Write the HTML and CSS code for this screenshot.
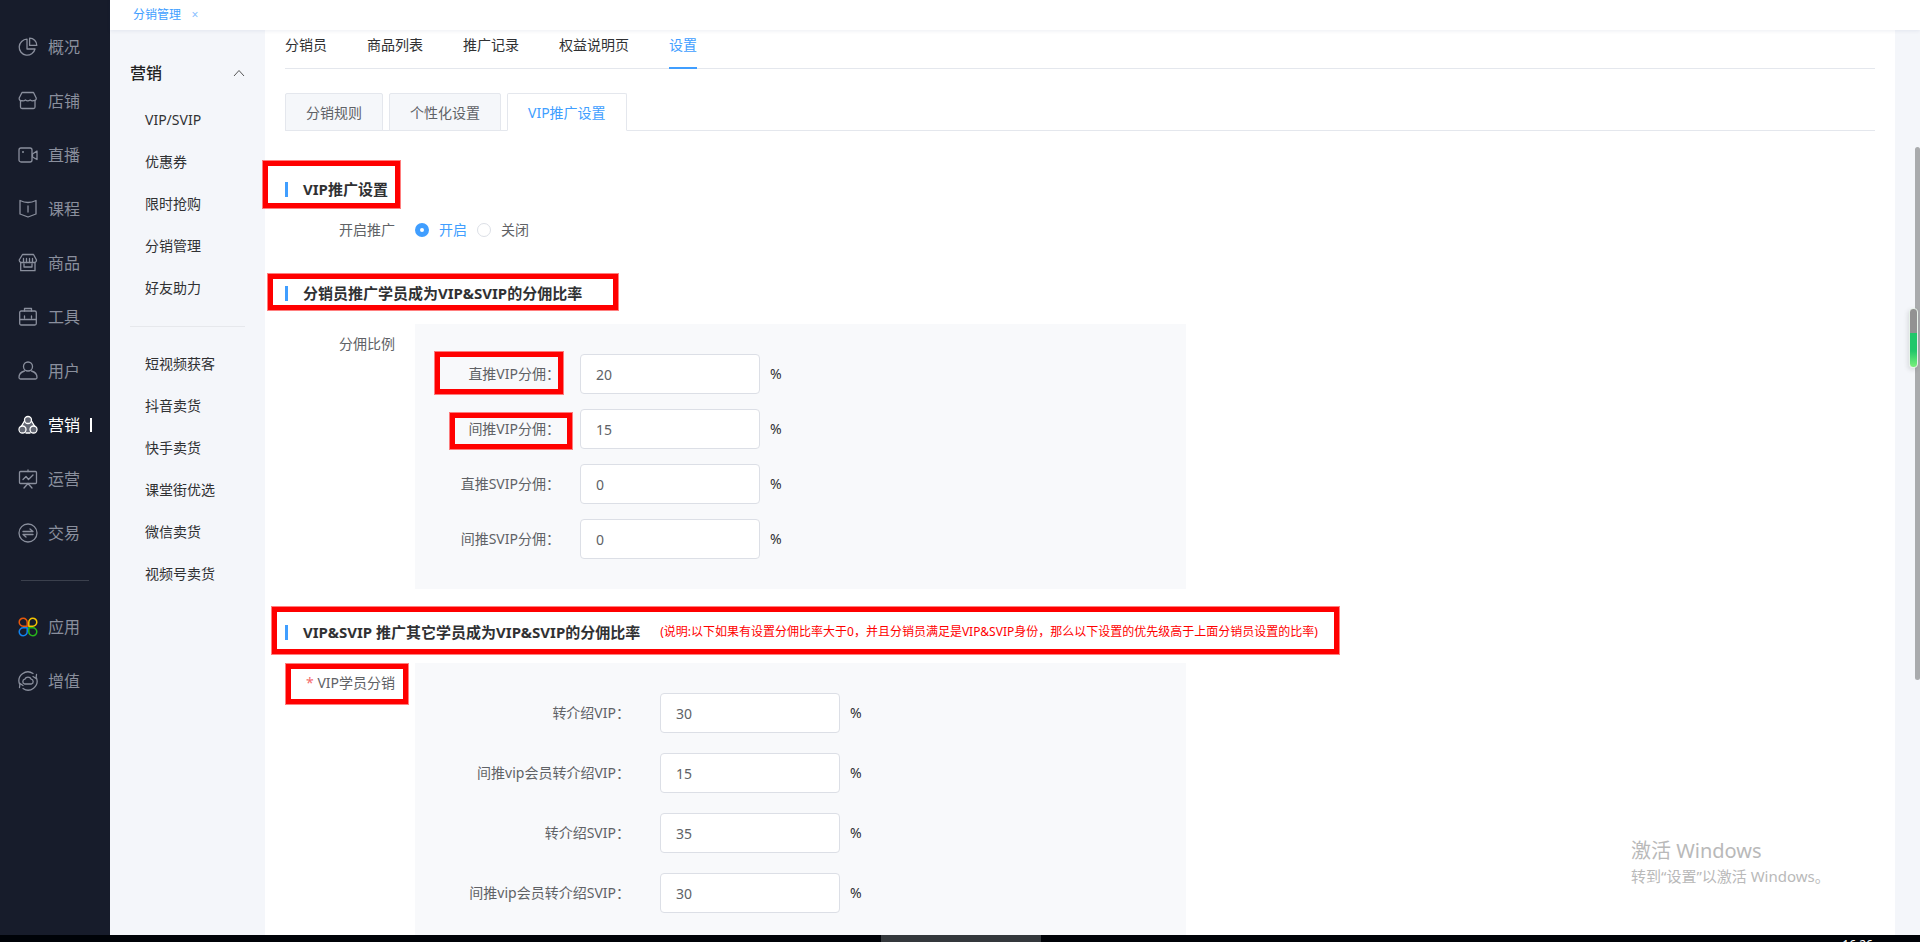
FILE: index.html
```html
<!DOCTYPE html>
<html lang="zh-CN">
<head>
<meta charset="utf-8">
<title>分销管理</title>
<link rel="stylesheet" href="styles.css">
</head>
<body>
<div class="app">
  <nav class="sidebar" aria-label="主导航">
    <a class="nav-item" href="#"><svg class="icon" viewBox="0 0 20 20"><path d="M9 2.200A8 8 0 1 0 17 12H9z"/><path d="M11.600 1.200v7.200h7.200a7.200 7.200 0 0 0-7.200-7.200z"/></svg>概况</a>
    <a class="nav-item" href="#"><svg class="icon" viewBox="0 0 20 20"><path d="M4 1.500h11.500l2.700 5.500a2.200 2.200 0 0 1-2.700 2.600 3.500 3.500 0 0 1-3.300-.6 4 4 0 0 1-4.800 0 3.500 3.500 0 0 1-3.300.6A2.200 2.200 0 0 1 1.200 7z"/><path d="M2.500 9.500V16q0 1.500 1.500 1.500h11.500q1.500 0 1.500-1.500V9.500"/></svg>店铺</a>
    <a class="nav-item" href="#"><svg class="icon" viewBox="0 0 20 20"><rect x="1" y="3" width="13" height="14" rx="2"/><circle cx="5" cy="7" r="1" class="dot"/><path d="M14.500 9l4.500-3v8.500L14.500 12z"/></svg>直播</a>
    <a class="nav-item" href="#"><svg class="icon" viewBox="0 0 20 20"><path d="M2 1.500q4 2 8 2 4 0 8-2v13.500l-8 3-8-3zM10 7v6"/></svg>课程</a>
    <a class="nav-item" href="#"><svg class="icon" viewBox="0 0 20 20"><path d="M4.500 1.500h11L18.500 7q0 2-1.700 2.500H3Q1.200 9 1.200 7z"/><path d="M2.700 9.500v8.200h14.300V9.500M5.500 5.500v4M8.500 5.500v4M11.500 5.500v4M14.500 5.500v4M6 11v3h8v-3"/></svg>商品</a>
    <a class="nav-item" href="#"><svg class="icon" viewBox="0 0 20 20"><rect x="1.700" y="4" width="16.600" height="14" rx="1.500"/><path d="M6.500 4V1.500h7V4M2 12.500h16M6.500 9v2M13.500 9v2"/></svg>工具</a>
    <a class="nav-item" href="#"><svg class="icon" viewBox="0 0 20 20"><circle cx="10" cy="5.500" r="4.500"/><path d="M6.500 10Q1 11.500 1 16.500q0 1.500 1.500 1.500h15q1.500 0 1.500-1.500 0-5-5.500-6.500"/></svg>用户</a>
    <a class="nav-item active" href="#"><svg class="icon" viewBox="0 0 20 20"><path d="M8 2L1.500 14Q2 18 6 18h9q4-1 3.500-4L12 2z" class="shade"/><circle cx="10" cy="5" r="3.500"/><circle cx="4.500" cy="14.500" r="3.500"/><circle cx="15.500" cy="14.500" r="3.500"/><path d="M6.500 6l-3 5M13.500 6l3 5M8 18h4"/></svg>营销</a>
    <a class="nav-item" href="#"><svg class="icon" viewBox="0 0 20 20"><rect x="1.500" y="2.500" width="17" height="12" rx="1"/><path d="M10 1v1.500M5 10.500l3-3 2.500 3L15 6M10 14.500L6 19M10 14.500l4 4.500"/></svg>运营</a>
    <a class="nav-item" href="#"><svg class="icon" viewBox="0 0 20 20"><circle cx="10" cy="10" r="9"/><path d="M5 8.500h10L12 6M15 11.500H5L8 14"/></svg>交易</a>
    <hr class="nav-line">
    <a class="nav-item" href="#"><svg class="icon apps" viewBox="0 0 20 20"><path stroke="#e8590c" d="M9.200 9.200H5.300A4 4 0 1 1 9.200 5.300z"/><path stroke="#f5c400" d="M10.800 9.200h3.900a4 4 0 1 0-3.900-3.900z"/><path stroke="#1283ee" d="M9.200 10.800H5.300a4 4 0 1 0 3.900 3.900z"/><path stroke="#27b51b" d="M10.800 10.800h3.900a4 4 0 1 1-3.900 3.900z"/></svg>应用</a>
    <a class="nav-item" href="#"><svg class="icon" viewBox="0 0 20 20"><path d="M1.500 13A9 9 0 0 1 15 2.500M18.500 7A9 9 0 0 1 5 17.500M18.500 3.500l-.5 4-3-2M1.500 16.500l.5-4 3 2"/><path d="M6.500 13a2.500 2.500 0 0 1 .3-4.800 3.500 3.500 0 0 1 6.400 0 2.500 2.500 0 0 1 .3 4.800z"/></svg>增值</a>
  </nav>

  <header class="topbar">
    <a class="page-tab" href="#">分销管理</a>
    <button class="page-close" type="button" aria-label="关闭标签">×</button>
  </header>

  <aside class="submenu">
    <button class="submenu-head" type="button">营销<svg class="chevron" viewBox="0 0 12 8"><path d="M1 7l5-5.500L11 7"/></svg></button>
    <a href="#">VIP/SVIP</a>
    <a href="#">优惠券</a>
    <a href="#">限时抢购</a>
    <a href="#">分销管理</a>
    <a href="#">好友助力</a>
    <hr>
    <a href="#">短视频获客</a>
    <a href="#">抖音卖货</a>
    <a href="#">快手卖货</a>
    <a href="#">课堂街优选</a>
    <a href="#">微信卖货</a>
    <a href="#">视频号卖货</a>
  </aside>

  <main class="content">
    <nav class="tabs" aria-label="分销管理">
      <a href="#">分销员</a><a href="#">商品列表</a><a href="#">推广记录</a><a href="#">权益说明页</a><a class="current" href="#">设置</a>
    </nav>
    <nav class="card-tabs" aria-label="设置">
      <a href="#">分销规则</a><a href="#">个性化设置</a><a class="current" href="#">VIP推广设置</a>
    </nav>

    <form>
      <h3 class="title first">VIP推广设置</h3>
      <div class="switch" role="radiogroup" aria-labelledby="promo">
        <span class="field-label" id="promo">开启推广</span>
        <label><input type="radio" name="promo" checked><span>开启</span></label>
        <label><input type="radio" name="promo"><span>关闭</span></label>
      </div>

      <h3 class="title second">分销员推广学员成为VIP&amp;SVIP的分佣比率</h3>
      <div class="field">
        <span class="field-label">分佣比例</span>
        <div class="panel">
          <div class="rate"><label for="a1">直推VIP分佣：</label><input id="a1" type="text" value="20"><span>%</span></div>
          <div class="rate"><label for="a2">间推VIP分佣：</label><input id="a2" type="text" value="15"><span>%</span></div>
          <div class="rate"><label for="a3">直推SVIP分佣：</label><input id="a3" type="text" value="0"><span>%</span></div>
          <div class="rate"><label for="a4">间推SVIP分佣：</label><input id="a4" type="text" value="0"><span>%</span></div>
        </div>
      </div>

      <h3 class="title third">VIP&amp;SVIP 推广其它学员成为VIP&amp;SVIP的分佣比率<small>(说明:以下如果有设置分佣比率大于0，并且分销员满足是VIP&amp;SVIP身份，那么以下设置的优先级高于上面分销员设置的比率)</small></h3>
      <div class="field">
        <span class="field-label required">VIP学员分销</span>
        <div class="panel wide">
          <div class="rate"><label for="b1">转介绍VIP：</label><input id="b1" type="text" value="30"><span>%</span></div>
          <div class="rate"><label for="b2">间推vip会员转介绍VIP：</label><input id="b2" type="text" value="15"><span>%</span></div>
          <div class="rate"><label for="b3">转介绍SVIP：</label><input id="b3" type="text" value="35"><span>%</span></div>
          <div class="rate"><label for="b4">间推vip会员转介绍SVIP：</label><input id="b4" type="text" value="30"><span>%</span></div>
        </div>
      </div>
    </form>
  </main>

  <footer class="taskbar"><span class="task"></span><span class="clock">16:26</span></footer>
</div>

<div class="scrollbar"></div>
<div class="meter"></div>
<div class="watermark"><p>激活 Windows</p><p>转到“设置”以激活 Windows。</p></div>
<div class="frame f1"></div>
<div class="frame f2"></div>
<div class="frame f3"></div>
<div class="frame f4"></div>
<div class="frame f5"></div>
<div class="frame f6"></div>
</body>
</html>
```

FILE: styles.css
```css
* { box-sizing: border-box; }

body {
  margin: 0;
  position: relative;
  height: 100vh;
  overflow: hidden;
  font: 14px/20px "Noto Sans", "Noto Sans CJK SC", sans-serif;
  color: #303133;
}

a { color: inherit; text-decoration: none; }
button { border: 0; padding: 0; background: none; font: inherit; color: inherit; }
hr { border: 0; height: 1px; }
h3, p { margin: 0; }

.app {
  display: grid;
  grid-template: 30px minmax(0, 1fr) 7px / 110px 155px minmax(0, 1fr);
  height: 100%;
  background: #f4f6fa;
}

/* dark primary navigation */
.sidebar {
  grid-row: 1 / 3;
  padding-top: 20px;
  background: #171c2b;
  overflow: hidden;
}
.nav-item {
  display: flex;
  align-items: center;
  gap: 10px;
  height: 54px;
  padding-left: 18px;
  font-size: 16px;
  color: #8a8f9d;
}
.icon {
  width: 20px;
  height: 20px;
  fill: none;
  stroke: currentColor;
  stroke-width: 1.3;
  stroke-linejoin: round;
  stroke-linecap: round;
}
.icon .dot { fill: currentColor; stroke: none; }
.icon .shade { fill: #626673; stroke: none; }
.icon.apps { stroke-width: 1.5; }
.nav-item.active { color: #fff; }
.nav-item.active::after { content: ""; width: 2px; height: 14px; background: #fff; }
.nav-line { margin: 20px 21px 19px; background: #3b404d; }

.topbar {
  grid-column: 2 / 4;
  display: flex;
  align-items: center;
  gap: 10px;
  padding-left: 23px;
  background: #fff;
  box-shadow: 0 1px 4px rgba(0, 40, 100, .08);
  font-size: 12px;
  color: #409eff;
  z-index: 1;
}
.page-close { width: 8px; color: #8abfff; }

/* secondary menu */
.submenu { padding: 22px 20px 0; overflow: hidden; }
.submenu-head {
  display: flex;
  align-items: center;
  justify-content: space-between;
  width: 100%;
  height: 42px;
  margin-bottom: 5px;
  font-size: 16px;
  font-weight: 500;
  color: #222;
}
.chevron { width: 12px; height: 8px; fill: none; stroke: #555; }
.submenu a { display: block; padding-left: 15px; line-height: 42px; }
.submenu hr { margin: 17px 0 16px; background: #e6e8ec; }

/* settings page */
.content {
  margin-right: 25px;
  padding: 0 20px;
  background: #fff;
  overflow: hidden;
}
.tabs { display: flex; gap: 40px; height: 39px; border-bottom: 1px solid #e4e7ed; line-height: 30px; }
.tabs a { height: 39px; }
.tabs .current { color: #409eff; border-bottom: 2px solid #409eff; }

.card-tabs {
  display: flex;
  gap: 6px;
  margin-top: 24px;
  height: 38px;
  border-bottom: 1px solid #e4e7ed;
  line-height: 37px;
}
.card-tabs a {
  height: 38px;
  padding: 0 20px;
  border: 1px solid #e4e7ed;
  border-radius: 2px 2px 0 0;
  background: #f5f7fa;
  color: #606266;
}
.card-tabs .current { background: #fff; border-bottom-color: #fff; color: #409eff; }

.title {
  display: flex;
  align-items: center;
  font-size: 15px;
  font-weight: 700;
  white-space: nowrap;
  margin-bottom: 21px;
}
.title::before { content: ""; width: 3px; height: 15px; margin-right: 15px; background: #409eff; }
.title.first { margin-top: 48px; }
.title.second { margin-top: 43px; }
.title.third { margin-top: 33px; }
.title small { margin-left: 20px; font-size: 12px; font-weight: 400; color: #f00; }

.field-label { color: #606266; text-align: right; }
.required::before { content: "* "; color: #f56c6c; }

.switch { display: flex; }
.switch .field-label { width: 110px; margin-right: 20px; }
.switch label { display: flex; align-items: center; gap: 10px; margin-right: 10px; color: #606266; }
.switch input {
  appearance: none;
  width: 14px;
  height: 14px;
  margin: 0;
  border: 1px solid #dcdfe6;
  border-radius: 50%;
  background: #fff;
}
.switch input:checked { border: 5px solid #409eff; }
.switch input:checked + span { color: #409eff; }

.field { display: grid; grid-template-columns: 110px minmax(0, 771px); gap: 20px; }
.field > .field-label { line-height: 40px; }
.panel { display: grid; gap: 15px; padding: 30px 0; background: #f8f9fb; }
.rate {
  display: grid;
  grid-template-columns: 145px 180px auto;
  column-gap: 20px;
  align-items: center;
  justify-content: start;
}
.rate label { text-align: right; color: #606266; }
.rate input {
  width: 180px;
  height: 40px;
  padding: 0 15px;
  border: 1px solid #dcdfe6;
  border-radius: 4px;
  background: #fff;
  font: inherit;
  color: #606266;
}
.rate span { margin-left: -10px; }
.panel.wide { gap: 20px; }
.wide .rate { grid-template-columns: 215px 180px auto; column-gap: 30px; }
.wide .rate span { margin-left: -20px; }

/* desktop taskbar edge */
.taskbar {
  grid-column: 1 / 4;
  display: flex;
  justify-content: space-between;
  padding: 0 47px 0 881px;
  background: #000308;
  overflow: hidden;
  z-index: 1;
}
.task { width: 160px; background: #34383c; }
.clock { font-size: 12px; line-height: 20px; color: #fff; }

.scrollbar {
  position: absolute;
  right: 0;
  top: 147px;
  width: 5px;
  height: 533px;
  border-radius: 3px;
  background: #a9abad;
}
.meter {
  position: absolute;
  right: 2px;
  top: 308px;
  width: 9px;
  height: 60px;
  border: 1px solid #e8f2ea;
  border-radius: 4px;
  background: linear-gradient(#929292 0 24px, #22c76a 24px 42px, #7af07c);
  box-shadow: -1px 2px 5px rgba(0, 0, 0, .12);
}
.watermark {
  position: absolute;
  right: 93px;
  bottom: 55px;
  width: 196px;
  font-size: 15px;
  line-height: 22px;
  white-space: nowrap;
  color: #b9b9b9;
}
.watermark p:first-child { font-size: 20px; line-height: 28px; }

/* red callout frames */
.frame {
  position: absolute;
  border: 5px solid #f00;
  box-shadow: 0 0 0 1px rgba(255, 0, 0, .5);
  pointer-events: none;
}
.f1 { left: 263px; top: 161px; width: 137px; height: 47px; }
.f2 { left: 268px; top: 274px; width: 350px; height: 36px; }
.f3 { left: 435px; top: 352px; width: 128px; height: 42px; }
.f4 { left: 450px; top: 413px; width: 122px; height: 36px; }
.f5 { left: 272px; top: 607px; width: 1067px; height: 47px; }
.f6 { left: 286px; top: 664px; width: 122px; height: 40px; }
```
